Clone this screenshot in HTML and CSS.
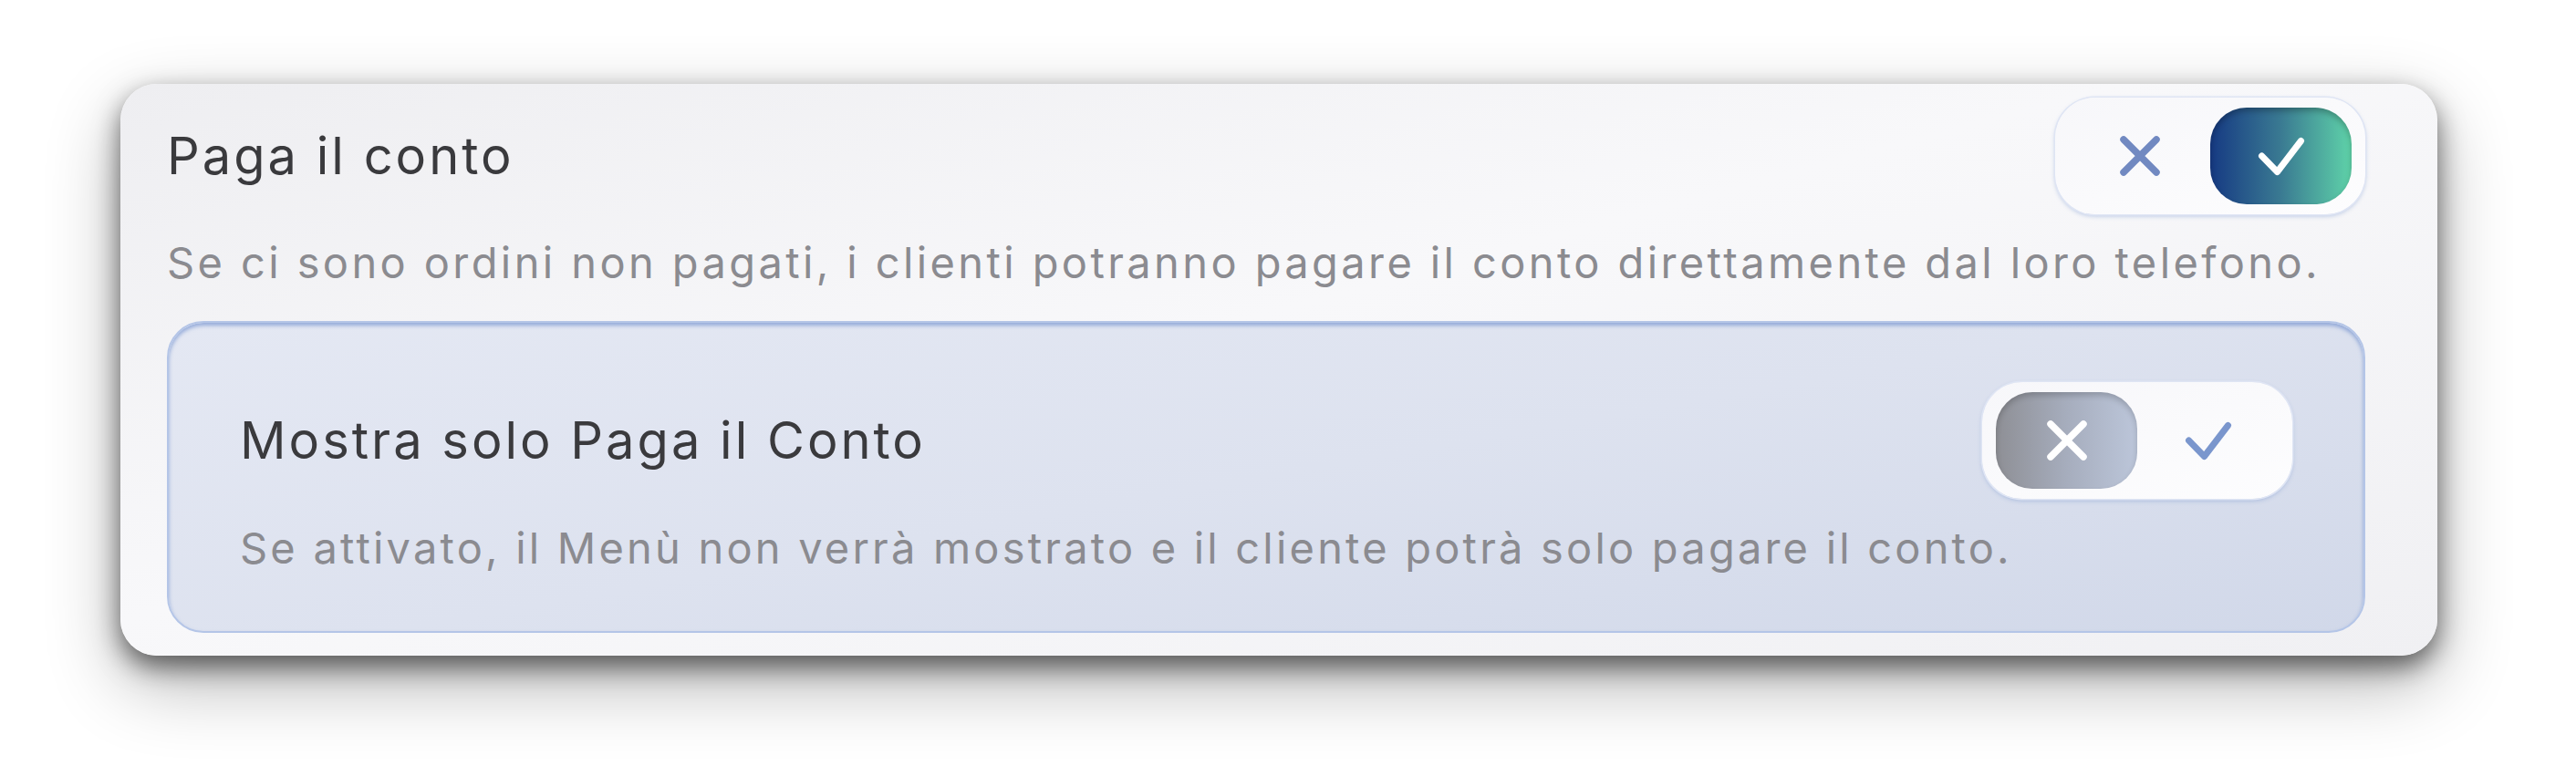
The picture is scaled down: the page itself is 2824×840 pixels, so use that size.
FILE: index.html
```html
<!DOCTYPE html>
<html lang="it">
<head>
    <meta charset="UTF-8">
    <meta name="viewport" content="width=device-width, initial-scale=1.0">
    <title>Paga il conto</title>
    <link rel="stylesheet" href="styles.css">
</head>
<body>
    <main class="page">
        <section class="setting-card">
            <div class="setting-row">
                <h2 class="setting-title">Paga il conto</h2>
                <div class="toggle">
                    <button type="button" class="toggle-opt toggle-off">
                        <svg width="44" height="44" viewBox="0 0 44 44"><path d="M4 4 L40 40 M40 4 L4 40" /></svg>
                    </button>
                    <button type="button" class="toggle-opt toggle-on is-active">
                        <svg width="52" height="43" viewBox="0 0 52 43"><path d="M4.5 21 L21.5 38.5 L47.5 4.5" /></svg>
                    </button>
                </div>
            </div>
            <p class="setting-desc">Se ci sono ordini non pagati, i clienti potranno pagare il conto direttamente dal loro telefono.</p>

            <div class="sub-setting">
                <div class="setting-row">
                    <h3 class="setting-title">Mostra solo Paga il Conto</h3>
                    <div class="toggle">
                        <button type="button" class="toggle-opt toggle-off is-active">
                            <svg width="44" height="44" viewBox="0 0 44 44"><path d="M4 4 L40 40 M40 4 L4 40" /></svg>
                        </button>
                        <button type="button" class="toggle-opt toggle-on">
                            <svg width="52" height="43" viewBox="0 0 52 43"><path d="M4.5 21 L21.5 38.5 L47.5 4.5" /></svg>
                        </button>
                    </div>
                </div>
                <p class="setting-desc">Se attivato, il Menù non verrà mostrato e il cliente potrà solo pagare il conto.</p>
            </div>
        </section>
    </main>
</body>
</html>
```

FILE: styles.css
```css
body {
    font-family: 'Inter', 'Noto Sans', sans-serif;
    margin: 0;
    padding: 0;
    min-height: 100vh;
    background-color: #fff;
    color: #3a3a3d;
}
.page {
    padding: 92px 0 0 132px;
}
.setting-card {
    box-sizing: border-box;
    width: 2540px;
    padding: 15px 79px 25px 51px;
    border-radius: 40px;
    background: linear-gradient(165deg, #eeeef1 0%, #f8f8fa 45%, #f0f0f3 100%);
    box-shadow: 0 12px 28px rgba(0, 0, 0, 0.55), 0 30px 80px rgba(0, 0, 0, 0.3);
}
.setting-row {
    display: flex;
    justify-content: space-between;
    align-items: center;
}
.setting-title {
    margin: 0;
    font-size: 56px;
    font-weight: 400;
    letter-spacing: 3px;
    color: #3a3a3d;
}
.setting-desc {
    margin: 26px 0 0 0;
    font-size: 47px;
    line-height: 54px;
    letter-spacing: 3.4px;
    color: #8b8b90;
}
.sub-setting {
    margin-top: 37px;
    padding: 65px 78px 64px 78px;
    border: 2px solid #b4c5e7;
    border-radius: 40px;
    background: linear-gradient(170deg, #e4e8f3 0%, #dde2ef 50%, #d1d8e9 100%);
    box-shadow: inset 0 3px 4px rgba(95, 130, 200, 0.6);
}
.sub-setting .setting-desc {
    margin-top: 27px;
    letter-spacing: 3.2px;
}
.toggle {
    display: flex;
    padding: 11px 15px;
    border-radius: 44px;
    background: linear-gradient(160deg, #f7f7fa, #fdfdfe);
    box-shadow: 0 0 0 1.5px #dfe5f4, 0 2px 5px rgba(100, 135, 200, 0.45);
}
.toggle-opt {
    display: flex;
    align-items: center;
    justify-content: center;
    width: 155px;
    height: 106px;
    padding: 0;
    border: none;
    border-radius: 40px;
    background: transparent;
    cursor: pointer;
}
.toggle-opt svg path {
    fill: none;
    stroke: #7189c1;
    stroke-width: 7.5;
    stroke-linecap: round;
    stroke-linejoin: round;
}
.toggle-on svg path {
    stroke: #7a96cd;
    stroke-width: 7;
}
.toggle-on.is-active {
    background: linear-gradient(90deg, #163a83 0%, #3a7a92 50%, #5fd3a9 100%);
    box-shadow: inset 0 4px 6px rgba(0, 0, 0, 0.25);
}
.toggle-off.is-active {
    background: linear-gradient(90deg, #8e8f95 0%, #a6adbd 50%, #bcc6da 100%);
    box-shadow: inset 0 4px 6px rgba(0, 0, 0, 0.18);
}
.toggle-opt.is-active svg path {
    stroke: #fff;
}
```
